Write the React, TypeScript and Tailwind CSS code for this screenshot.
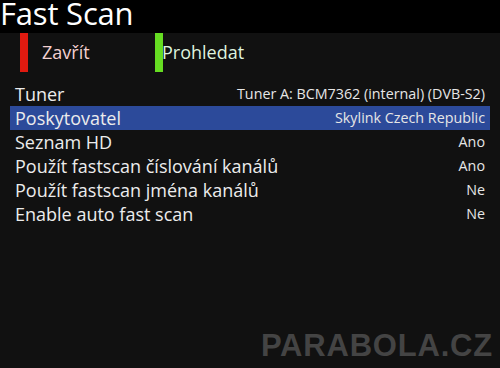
const rows = [
  { label: "Tuner", value: "Tuner A: BCM7362 (internal) (DVB-S2)" },
  { label: "Poskytovatel", value: "Skylink Czech Republic", active: true },
  { label: "Seznam HD", value: "Ano" },
  { label: "Použít fastscan číslování kanálů", value: "Ano" },
  { label: "Použít fastscan jména kanálů", value: "Ne" },
  { label: "Enable auto fast scan", value: "Ne" },
];

export default function App() {
  return (
    <div
      className="w-[500px] h-[368px] bg-[#111111] flex flex-col overflow-hidden"
      style={{ fontFamily: '"Open Sans", "Noto Sans", sans-serif' }}
    >
      {/* Title bar */}
      <div className="h-[33px] bg-black flex items-start">
        <h1 className="text-[31px] leading-[26px] text-white tracking-[-0.2px]">Fast Scan</h1>
      </div>

      {/* Color buttons */}
      <div className="h-[39px] flex items-stretch">
        <div className="ml-[20px] w-[8px] bg-[#e01a10]" />
        <div className="ml-[14px] w-[113px] flex items-center text-[18px] text-[#f3d0d0] pb-[1px]">Zavřít</div>
        <div className="w-[8px] bg-[#66dd22]" />
        <div className="-ml-[1px] flex items-center text-[18px] text-[#dff3df] pb-[1px]">Prohledat</div>
      </div>

      {/* Settings list */}
      <div className="mt-[10px] mx-[10px] flex flex-col">
        {rows.map((r) => (
          <div
            key={r.label}
            className={`h-[24px] flex items-center justify-between pl-[5px] pr-[5px] ${
              r.active ? "bg-[#2c4a9a]" : ""
            }`}
          >
            <span className="text-[18px] text-[#ececec] leading-none">{r.label}</span>
            <span className="text-[14.3px] text-[#e6e6e6] leading-none">{r.value}</span>
          </div>
        ))}
      </div>

      {/* Watermark */}
      <div className="mt-auto mb-[7px] pr-[7px] flex justify-end">
        <span
          className="text-[31px] font-bold leading-none text-[#444444] tracking-[0.8px]"
          style={{ fontFamily: '"Liberation Sans", Arial, sans-serif' }}
        >
          PARABOLA.CZ
        </span>
      </div>
    </div>
  );
}
